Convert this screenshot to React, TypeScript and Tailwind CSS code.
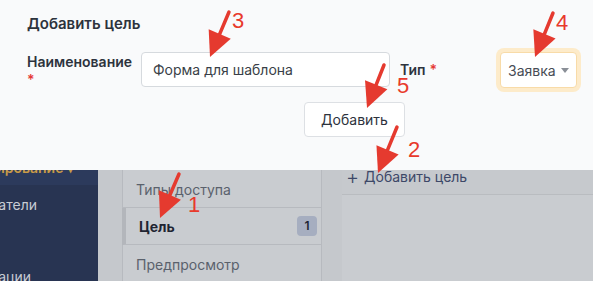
import React from "react";

type Pt = [number, number];

const arrows: { tail: Pt; tip: Pt }[] = [
  { tail: [229, 12], tip: [210, 57] },
  { tail: [553, 13], tip: [535, 57] },
  { tail: [384, 65], tip: [367, 108] },
  { tail: [397, 127], tip: [378, 173] },
  { tail: [179, 174], tip: [160, 218] },
];

const numbers = [
  { n: "3", x: 232, y: 8 },
  { n: "4", x: 556, y: 10 },
  { n: "5", x: 397, y: 73 },
  { n: "2", x: 408, y: 137 },
  { n: "1", x: 188, y: 192 },
];

function Arrow({ tail, tip }: { tail: Pt; tip: Pt }) {
  const dx = tip[0] - tail[0];
  const dy = tip[1] - tail[1];
  const len = Math.hypot(dx, dy);
  const ux = dx / len;
  const uy = dy / len;
  const headLen = 25;
  const half = 12;
  const bx = tip[0] - ux * headLen;
  const by = tip[1] - uy * headLen;
  const p1 = `${bx - uy * half},${by + ux * half}`;
  const p2 = `${bx + uy * half},${by - ux * half}`;
  return (
    <g>
      <line
        x1={tail[0]}
        y1={tail[1]}
        x2={bx + ux * 4}
        y2={by + uy * 4}
        stroke="#e53a2f"
        strokeWidth={3.5}
        strokeLinecap="round"
      />
      <polygon points={`${tip[0]},${tip[1]} ${p1} ${p2}`} fill="#e53a2f" />
    </g>
  );
}

function App() {
  return (
    <div className="relative w-[593px] h-[281px] overflow-hidden font-['Inter',sans-serif] bg-[#c5c8cc]">
      {/* modal panel */}
      <div className="h-[170px] bg-[#f9fafb] pl-[27px] pt-[14px]">
        <h3 className="text-[15px] leading-[20px] font-semibold text-[#2d333d]">Добавить цель</h3>

        <div className="flex items-start mt-[18px]">
          <label className="w-[114px] pt-[1px] text-[14px] leading-[18px] font-semibold text-[#2d333d]">
            Наименование <span className="text-[#e53935]">*</span>
          </label>
          <div className="w-[249px] h-[35px] flex items-center border border-[#d6dade] rounded-[4px] bg-white pl-[11px] text-[14px] text-[#3a3f47]">
            Форма для шаблона
          </div>
          <div className="w-[110px] h-[35px] flex items-center pl-[10px] text-[14px] font-semibold text-[#2d333d]">
            Тип <span className="ml-[4px] text-[#e53935]">*</span>
          </div>
          <div className="w-[77px] h-[36px] flex items-center justify-between border border-[#f8dba8] ring-4 ring-[#fdebca] rounded-[4px] bg-white pl-[7px] pr-[7px] text-[14px] text-[#474c55]">
            Заявка
            <span className="w-0 h-0 border-x-[4px] border-x-transparent border-t-[5px] border-t-[#8a8f97]" />
          </div>
        </div>

        <div className="mt-[13px] ml-[277px] w-[101px] h-[35px] flex items-center justify-center border border-[#dde0e4] rounded-[4px] bg-white text-[14px] text-[#2d333d]">
          Добавить
        </div>
      </div>

      {/* dimmed page */}
      <div className="flex h-[111px] overflow-hidden">
        <div className="w-[98px] bg-[#283452] text-[14px] text-[#c8ccd4] overflow-hidden">
          <div className="h-[15px] bg-[#2c3a5c] overflow-hidden">
            <div className="flex justify-end w-[74px] -mt-[12px] whitespace-nowrap leading-[20px] font-semibold text-[#c89a48]">
              Администрирование ▾
            </div>
          </div>
          <div className="flex justify-end w-[37px] mt-[10px] whitespace-nowrap leading-[20px]">Пользователи</div>
          <div className="flex justify-end w-[31px] mt-[52px] whitespace-nowrap leading-[20px]">Организации</div>
        </div>

        <div className="w-[200px] ml-[24px] flex flex-col text-[14px] text-[#5a616c]">
          <div className="h-[38px] shrink-0 flex items-center pl-[13px] pt-[2px] bg-[#c9ccd0] border-x border-b border-[#b7babf]">
            Типы доступа
          </div>
          <div className="h-[37px] shrink-0 flex items-center justify-between pl-[13px] pr-[4px] bg-[#c9ccd0] border-l-4 border-r border-b border-l-[#b3b6bb] border-r-[#b7babf] border-b-[#b7babf]">
            <span className="font-bold text-[#1f2533]">Цель</span>
            <span className="w-[20px] h-[20px] flex items-center justify-center rounded-[4px] bg-[#a6aec0] text-[12px] font-semibold text-[#1f2533]">1</span>
          </div>
          <div className="h-[40px] shrink-0 flex items-center pl-[13px] bg-[#c9ccd0] border-x border-b border-[#b7babf]">
            Предпросмотр
          </div>
        </div>

        <div className="flex-1 ml-[20px] flex flex-col">
          <div className="h-[25px] flex items-start pl-[4px] bg-[#c6c9cd] border-b border-[#b9bcc0] text-[14px] leading-[14px] text-[#3d4868]">
            <span className="mr-[5px] text-[20px] leading-[14px] font-light">+</span>Добавить цель
          </div>
          <div className="flex-1 bg-[#c9ccd0]" />
        </div>
      </div>

      {/* annotations */}
      <svg className="absolute inset-0 pointer-events-none" width={593} height={281} viewBox="0 0 593 281">
        {arrows.map((a, i) => (
          <Arrow key={i} tail={a.tail} tip={a.tip} />
        ))}
      </svg>
      {numbers.map((d) => (
        <span
          key={d.n}
          className="absolute font-['Liberation_Sans',sans-serif] text-[22px] leading-[26px] text-[#e8392b]"
          style={{ left: d.x, top: d.y }}
        >
          {d.n}
        </span>
      ))}
    </div>
  );
}

export default App;
